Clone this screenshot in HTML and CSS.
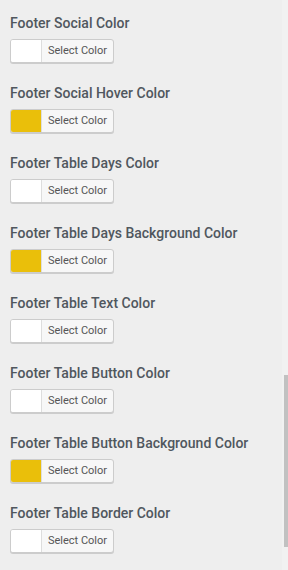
FILE: index.html
```html
<!DOCTYPE html>
<html lang="en">
<head>
    <meta charset="UTF-8">
    <meta name="viewport" content="width=device-width, initial-scale=1.0">
    <title>Footer Colors</title>
    <link rel="stylesheet" href="styles.css">
</head>
<body>
    <div class="options">
        <div class="option">
            <h3>Footer Social Color</h3>
            <button class="picker"><span class="swatch"></span><span class="label">Select Color</span></button>
        </div>
        <div class="option">
            <h3>Footer Social Hover Color</h3>
            <button class="picker"><span class="swatch yellow"></span><span class="label">Select Color</span></button>
        </div>
        <div class="option">
            <h3>Footer Table Days Color</h3>
            <button class="picker"><span class="swatch"></span><span class="label">Select Color</span></button>
        </div>
        <div class="option">
            <h3>Footer Table Days Background Color</h3>
            <button class="picker"><span class="swatch yellow"></span><span class="label">Select Color</span></button>
        </div>
        <div class="option">
            <h3>Footer Table Text Color</h3>
            <button class="picker"><span class="swatch"></span><span class="label">Select Color</span></button>
        </div>
        <div class="option">
            <h3>Footer Table Button Color</h3>
            <button class="picker"><span class="swatch"></span><span class="label">Select Color</span></button>
        </div>
        <div class="option">
            <h3>Footer Table Button Background Color</h3>
            <button class="picker"><span class="swatch yellow"></span><span class="label">Select Color</span></button>
        </div>
        <div class="option">
            <h3>Footer Table Border Color</h3>
            <button class="picker"><span class="swatch"></span><span class="label">Select Color</span></button>
        </div>
    </div>

    <div class="scrollbar"><div class="thumb"></div></div>
</body>
</html>
```

FILE: styles.css
```css
html, body {
    height: 100%;
}
body {
    margin: 0;
    background: #eeeeee;
    font-family: Roboto, "Noto Sans", sans-serif;
    overflow: hidden;
}
.options {
    padding: 13px 0 0 10px;
}
.option {
    height: 70px;
}
.option h3 {
    margin: 0;
    font-size: 14px;
    line-height: 20px;
    font-weight: 500;
    color: #50575e;
}
.picker {
    display: flex;
    margin-top: 6px;
    padding: 0;
    width: 104px;
    height: 24px;
    border: 1px solid #cccccc;
    border-radius: 3px;
    background: #f7f7f7;
    box-shadow: 0 1px 0 #cccccc;
    font-family: inherit;
    cursor: pointer;
    overflow: hidden;
}
.swatch {
    width: 30px;
    height: 100%;
    background: #ffffff;
    border-right: 1px solid #dddddd;
}
.swatch.yellow {
    background: #eabf0a;
}
.label {
    flex: 1;
    font-size: 11px;
    line-height: 22px;
    color: #555555;
    text-align: center;
}
.scrollbar {
    position: fixed;
    top: 0;
    right: 0;
    width: 6px;
    height: 100%;
    background: #f1f1f1;
}
.thumb {
    position: absolute;
    right: 0;
    top: 375px;
    width: 4px;
    height: 172px;
    background: #c1c1c1;
}
```
